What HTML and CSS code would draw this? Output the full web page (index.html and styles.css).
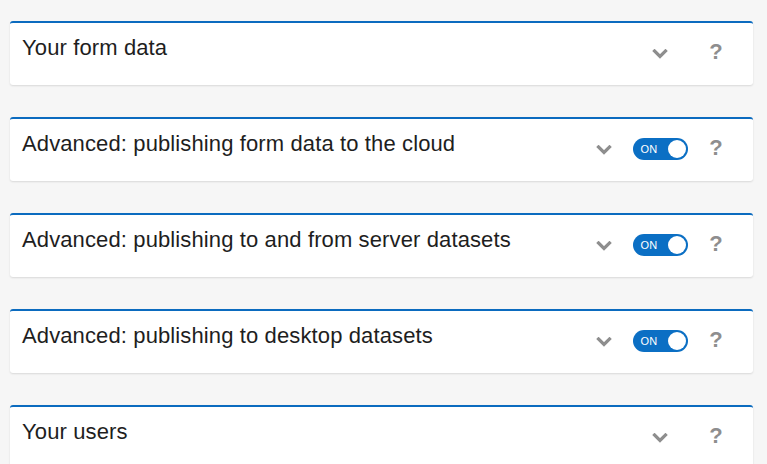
FILE: index.html
```html
<!DOCTYPE html>
<html>
<head>
<meta charset="utf-8">
<link rel="stylesheet" href="styles.css">
</head>
<body>
<div class="page">
  <div class="card">
    <div class="title">Your form data</div>
    <div class="controls">
      <span class="cell"><svg class="chev" viewBox="0 0 16 10"><path d="M2.5 2 L8 7.5 L13.5 2"/></svg></span>
      <span class="cell help">?</span>
    </div>
  </div>
  <div class="card">
    <div class="title">Advanced: publishing form data to the cloud</div>
    <div class="controls">
      <span class="cell"><svg class="chev" viewBox="0 0 16 10"><path d="M2.5 2 L8 7.5 L13.5 2"/></svg></span>
      <span class="cell"><span class="toggle"><span class="on">ON</span><span class="knob"></span></span></span>
      <span class="cell help">?</span>
    </div>
  </div>
  <div class="card">
    <div class="title">Advanced: publishing to and from server datasets</div>
    <div class="controls">
      <span class="cell"><svg class="chev" viewBox="0 0 16 10"><path d="M2.5 2 L8 7.5 L13.5 2"/></svg></span>
      <span class="cell"><span class="toggle"><span class="on">ON</span><span class="knob"></span></span></span>
      <span class="cell help">?</span>
    </div>
  </div>
  <div class="card">
    <div class="title">Advanced: publishing to desktop datasets</div>
    <div class="controls">
      <span class="cell"><svg class="chev" viewBox="0 0 16 10"><path d="M2.5 2 L8 7.5 L13.5 2"/></svg></span>
      <span class="cell"><span class="toggle"><span class="on">ON</span><span class="knob"></span></span></span>
      <span class="cell help">?</span>
    </div>
  </div>
  <div class="card">
    <div class="title">Your users</div>
    <div class="controls">
      <span class="cell"><svg class="chev" viewBox="0 0 16 10"><path d="M2.5 2 L8 7.5 L13.5 2"/></svg></span>
      <span class="cell help">?</span>
    </div>
  </div>
</div>
</body>
</html>
```

FILE: styles.css
```css
html, body {
  margin: 0;
  padding: 0;
  background: #f6f6f6;
  font-family: "Liberation Sans", Arial, sans-serif;
  overflow: hidden;
}
.page {
  padding: 21px 14px 0 10px;
  display: flex;
  flex-direction: column;
  gap: 32px;
}
.card {
  background: #fff;
  border-top: 2px solid #0b6bbf;
  border-radius: 3px;
  box-shadow: 0 1px 2px rgba(0, 0, 0, 0.12);
  height: 62px;
  display: flex;
  align-items: center;
  padding: 0 9px 0 12px;
}
.title {
  flex: 1;
  align-self: flex-start;
  margin-top: 12px;
  font-size: 22px;
  line-height: 26px;
  letter-spacing: 0.12px;
  color: #1e1e1e;
}
.controls {
  display: flex;
  align-items: center;
  margin-bottom: 3px;
}
.cell {
  width: 56px;
  height: 24px;
  display: flex;
  align-items: center;
  justify-content: center;
}
.chev {
  width: 16px;
  height: 10px;
  fill: none;
  stroke: #8e8e8e;
  stroke-width: 3.2;
  stroke-linecap: square;
  margin-top: 3px;
}
.help {
  font-weight: bold;
  font-size: 22px;
  color: #8e8e8e;
  margin-top: -2px;
}
.toggle {
  width: 55px;
  height: 22px;
  border-radius: 11px;
  background: #0b6fc4;
  display: flex;
  align-items: center;
  justify-content: space-between;
  padding: 0 2px 0 8px;
  box-sizing: border-box;
}
.on {
  color: #fff;
  font-size: 11px;
  letter-spacing: 0.3px;
}
.knob {
  width: 18px;
  height: 18px;
  border-radius: 50%;
  background: #fff;
}
```
